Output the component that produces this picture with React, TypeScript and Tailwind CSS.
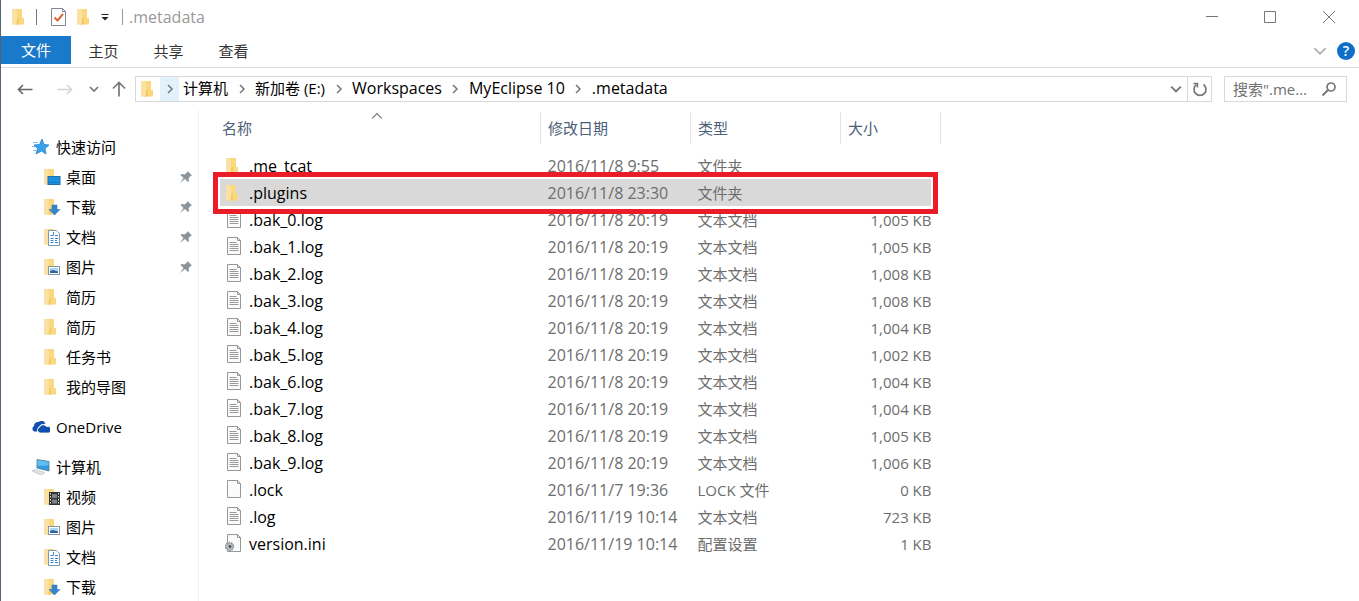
import type { ReactNode } from "react";

type Overlay = "desktop" | "download" | "document" | "picture" | "video";

function FolderIcon({ overlay }: { overlay?: Overlay }) {
  return (
    <svg width="18" height="18" viewBox="0 0 18 18" className="shrink-0" aria-hidden="true">
      <path d="M1 1h10v9h2v6.500H1z" fill="#f9d87f" />
      <path d="M1 1h3.500l1.500 3v13L1 15.500z" fill="#fbe2a4" />
      <path d="M6 11l2-1.500V16.500H5.500z" fill="#f1cb65" />
      {overlay === "desktop" && (
        <>
          <rect x="5" y="8.500" width="12" height="8" fill="#1b8fe0" stroke="#1f6fae" />
          <path d="M6 14.500h10" stroke="#1566a5" strokeDasharray="1 1" />
        </>
      )}
      {overlay === "download" && (
        <path d="M9 7h5v4.500h3L11.500 17 6 11.500h3z" fill="#3584cc" stroke="#2b74b8" strokeWidth=".5" />
      )}
      {overlay === "document" && (
        <>
          <path d="M5.500 2.500h8l3 3v12h-11z" fill="#fff" stroke="#7f98b2" />
          <path d="M10.500 4v3M7.500 7.500h3M12 7.500h3M7.500 10.500h3M12 10.500h3M7.500 12.500h3M12 14.500h3M7.500 14.500h3M12 12.500h2" stroke="#3c86c8" />
        </>
      )}
      {overlay === "picture" && (
        <>
          <rect x="5.500" y="8.500" width="11" height="8" fill="#fff" stroke="#8795a3" />
          <rect x="7" y="10" width="8" height="5" fill="#a9d4f2" />
          <path d="M7 15v-2l3-1 5 1.500V15z" fill="#2b669b" />
        </>
      )}
      {overlay === "video" && (
        <>
          <rect x="6" y="4" width="11" height="13" fill="#333" />
          <path d="M7.500 5v12M15.500 5v12" stroke="#ddd" strokeDasharray="1.500 1.500" />
          <path d="M9 6h5v4H9zM9 11.500h5v4H9z" fill="#7d838b" />
        </>
      )}
    </svg>
  );
}

function StarIcon() {
  return (
    <svg width="18" height="18" viewBox="0 0 18 18" className="shrink-0" aria-hidden="true">
      <path d="M10 1l2 5.500 5 .5-4 3.500 1 5.500-4.500-3L4 16l1.500-5.500L2 7l5.500-.5z" fill="#3aa0ea" stroke="#2282cf" strokeWidth=".8" />
      <path d="M1 4.500h5M0 8.500h3M1 12.500h3" stroke="#7cc0f0" />
    </svg>
  );
}

function CloudIcon() {
  return (
    <svg width="18" height="18" viewBox="0 0 18 18" className="shrink-0" aria-hidden="true">
      <path d="M2.500 13.500A3 3 0 0 1 2 8 4 4 0 0 1 6.500 4 4.500 4.500 0 0 1 13.500 5.500L9 6.500 6 9.500 5 13.500z" fill="#0f4fae" />
      <path d="M8 15a3 3 0 0 1-.5-5.800A4 4 0 0 1 14.500 8.500 3.300 3.300 0 0 1 17 15z" fill="#0f4fae" stroke="#fff" strokeWidth=".8" />
    </svg>
  );
}

function ComputerIcon() {
  return (
    <svg width="18" height="18" viewBox="0 0 18 18" className="shrink-0" aria-hidden="true">
      <path d="M5 1.500l12 2v9.500L5 10z" fill="#2f9de6" stroke="#53718a" strokeWidth=".8" />
      <path d="M5.500 2l11 2v3.500L5.500 8z" fill="#62bdf3" />
      <path d="M0 13l3-1.500 10 3L9 17z" fill="#dfe3e6" stroke="#b4bbc1" strokeWidth=".6" />
    </svg>
  );
}

function PinIcon() {
  return (
    <svg width="14" height="14" viewBox="0 0 14 14" className="shrink-0" aria-hidden="true">
      <path d="M8.500 1L13 5.500l-1.500.5-2 2.500.5 2.500-1 1-3-3L1 13l3.500-5-3-3 1-1 3 .5L8 2.500z" fill="#8b949b" />
    </svg>
  );
}

type FileKind = "folder" | "text" | "blank" | "config";

function FileIcon({ kind }: { kind: FileKind }) {
  if (kind === "folder") return <FolderIcon />;
  return (
    <svg width="18" height="20" viewBox="0 0 18 20" className="shrink-0" aria-hidden="true">
      <path d="M2.500 .5h10l3 3v14h-13z" fill="#fbfbfb" stroke="#979797" />
      <path d="M12.500 .5v3h3" fill="none" stroke="#979797" />
      {kind === "text" && <path d="M4.500 5.500h7M4.500 7.500h9M4.500 9.500h9M4.500 11.500h9M4.500 13.500h9" stroke="#9a9a9a" />}
      {kind === "config" && (
        <>
          <circle cx="4.500" cy="12.500" r="4" fill="#b4b8bb" stroke="#8b9093" strokeDasharray="1.500 1" strokeWidth="1.500" />
          <circle cx="5" cy="12.500" r="1.300" fill="#3e4346" />
        </>
      )}
    </svg>
  );
}

function Chevron({ dir, size, color, width }: { dir: "right" | "down" | "up"; size: number; color: string; width: number }) {
  const d = dir === "right" ? "M3 1l4 4-4 4" : dir === "down" ? "M1 3l4 4 4-4" : "M1 7l4-4 4 4";
  return (
    <svg width={size} height={size} viewBox="0 0 10 10" aria-hidden="true">
      <path d={d} fill="none" stroke={color} strokeWidth={width} />
    </svg>
  );
}

type Place = { label: string; overlay?: Overlay; pinned?: boolean };

const quick: Place[] = [
  { label: "桌面", overlay: "desktop", pinned: true },
  { label: "下载", overlay: "download", pinned: true },
  { label: "文档", overlay: "document", pinned: true },
  { label: "图片", overlay: "picture", pinned: true },
  { label: "简历" },
  { label: "简历" },
  { label: "任务书" },
  { label: "我的导图" },
];

const computer: Place[] = [
  { label: "视频", overlay: "video" },
  { label: "图片", overlay: "picture" },
  { label: "文档", overlay: "document" },
  { label: "下载", overlay: "download" },
];

function PlaceGroup({ icon, label, items }: { icon: ReactNode; label: string; items: Place[] }) {
  return (
    <section>
      <a href="#" className="flex h-[30px] items-center gap-[6px] pl-[31px]">
        {icon}
        {label}
      </a>
      {items.map((p, i) => (
        <a href="#" key={i} className="flex h-[30px] items-center gap-[5px] pr-[5px] pl-[42px]">
          <FolderIcon overlay={p.overlay} />
          <span className="flex-1">{p.label}</span>
          {p.pinned && <PinIcon />}
        </a>
      ))}
    </section>
  );
}

type Row = { name: string; date: string; type: string; size: string; kind: FileKind; selected?: boolean };

const bakSizes = ["1,005", "1,005", "1,008", "1,008", "1,004", "1,002", "1,004", "1,004", "1,005", "1,006"];

const rows: Row[] = [
  { name: ".me_tcat", date: "2016/11/8 9:55", type: "文件夹", size: "", kind: "folder" },
  { name: ".plugins", date: "2016/11/8 23:30", type: "文件夹", size: "", kind: "folder", selected: true },
  ...bakSizes.map((s, i): Row => ({ name: `.bak_${i}.log`, date: "2016/11/8 20:19", type: "文本文档", size: `${s} KB`, kind: "text" })),
  { name: ".lock", date: "2016/11/7 19:36", type: "LOCK 文件", size: "0 KB", kind: "blank" },
  { name: ".log", date: "2016/11/19 10:14", type: "文本文档", size: "723 KB", kind: "text" },
  { name: "version.ini", date: "2016/11/19 10:14", type: "配置设置", size: "1 KB", kind: "config" },
];

const crumbs = [
  { label: "计算机" },
  { label: "新加卷 (E:)" },
  { label: "Workspaces", latin: true },
  { label: "MyEclipse 10", latin: true },
  { label: ".metadata", latin: true },
];

function TitleBar() {
  return (
    <header className="flex h-9 items-center pb-[2px] pl-[10px] text-[#999]">
      <FolderIcon />
      <span className="ml-[7px] h-4 w-px bg-[#777]" />
      <button aria-label="属性" className="ml-[14px]">
        <svg width="16" height="18" viewBox="0 0 16 18" aria-hidden="true">
          <path d="M.500.5h11l3 3v14h-14z" fill="#fff" stroke="#7d8790" />
          <path d="M11.500.5v3h3" fill="none" stroke="#7d8790" />
          <path d="M3.500 9.500l3 3 5.500-6.500" fill="none" stroke="#dc6638" strokeWidth="2" />
        </svg>
      </button>
      <button aria-label="新建文件夹" className="ml-[9px]"><FolderIcon /></button>
      <button aria-label="自定义快速访问工具栏" className="ml-[6px]">
        <svg width="10" height="8" viewBox="0 0 10 8" aria-hidden="true">
          <path d="M1.500 1.500h7" stroke="#222" />
          <path d="M1.500 4h7L5 7.500z" fill="#222" />
        </svg>
      </button>
      <span className="ml-3 h-4 w-px bg-[#999]" />
      <h1 className="ml-[6px] flex-1 text-base leading-5">.metadata</h1>
      <button aria-label="最小化" className="flex w-[58px] justify-center">
        <svg width="14" height="14" viewBox="0 0 14 14" aria-hidden="true"><path d="M1 6.500h12" stroke="#777" /></svg>
      </button>
      <button aria-label="最大化" className="flex w-[58px] justify-center">
        <svg width="14" height="14" viewBox="0 0 14 14" aria-hidden="true"><path d="M1.500 1.500h11v11h-11z" fill="none" stroke="#777" /></svg>
      </button>
      <button aria-label="关闭" className="flex w-[60px] justify-center">
        <svg width="14" height="14" viewBox="0 0 14 14" aria-hidden="true"><path d="M1 1l12 12M13 1L1 13" stroke="#777" /></svg>
      </button>
    </header>
  );
}

function Ribbon() {
  return (
    <nav className="flex h-8 items-stretch border-b border-[#dadbdc] text-[#333]">
      <button className="mb-[3px] w-[70px] bg-[#1979ca] text-white">文件</button>
      {["主页", "共享", "查看"].map((t) => (
        <button key={t} className="w-[65px] pb-[2px]">{t}</button>
      ))}
      <div className="ml-auto flex items-center gap-[10px] pr-1 pb-[2px]">
        <button aria-label="展开功能区"><Chevron dir="down" size={14} color="#a5a5a5" width={1.1} /></button>
        <button aria-label="帮助" className="flex size-[18px] items-center justify-center rounded-full bg-[#0f6fc6] text-sm font-semibold text-white">?</button>
      </div>
    </nav>
  );
}

function AddressRow() {
  return (
    <div className="flex h-[42px] items-center pr-3 pl-4">
      <button aria-label="后退">
        <svg width="16" height="16" viewBox="0 0 16 16" aria-hidden="true"><path d="M15.500 8.500H1.500M6 4L1.500 8.500 6 13" fill="none" stroke="#666" strokeWidth="1.600" /></svg>
      </button>
      <button aria-label="前进" className="ml-6">
        <svg width="16" height="16" viewBox="0 0 16 16" aria-hidden="true"><path d="M.5 8.500h14M10 4L14.500 8.500 10 13" fill="none" stroke="#d4d4d4" strokeWidth="1.600" /></svg>
      </button>
      <button aria-label="最近浏览的位置" className="ml-4"><Chevron dir="down" size={10} color="#777" width={1.700} /></button>
      <button aria-label="上移" className="ml-3">
        <svg width="16" height="16" viewBox="0 0 16 16" aria-hidden="true"><path d="M8 15.500V1.500M2 7.500l6-6 6 6" fill="none" stroke="#777" strokeWidth="1.700" /></svg>
      </button>
      <div className="ml-2 flex h-[26px] flex-1 items-center border border-[#d9d9d9] pl-1">
        <FolderIcon />
        <ol className="flex h-full flex-1 items-center">
          {crumbs.map((c, i) => (
            <li key={c.label} className="flex h-full items-center">
              <span className={i === 0 ? "mr-1 ml-[2px] flex h-full w-[19px] items-center justify-center bg-[#e3f1fb]" : "flex w-[27px] justify-center"}>
                <Chevron dir="right" size={10} color="#777" width={1.500} />
              </span>
              <a href="#" className={c.latin ? "pb-[2px] text-base leading-5" : "pb-[2px]"}>{c.label}</a>
            </li>
          ))}
        </ol>
        <button aria-label="历史记录" className="px-[5px]"><Chevron dir="down" size={12} color="#777" width={1.600} /></button>
        <button aria-label="刷新" className="flex h-full w-6 items-center justify-center border-l border-[#d9d9d9]">
          <svg width="16" height="16" viewBox="0 0 16 16" aria-hidden="true">
            <path d="M4.500 3.500A6 6 0 1 0 11.500 3.500" fill="none" stroke="#777" strokeWidth="1.700" />
            <path d="M1.500 2.500h4v4" fill="none" stroke="#777" strokeWidth="1.500" />
          </svg>
        </button>
      </div>
      <label className="ml-3 flex h-[26px] w-[123px] items-center border border-[#d9d9d9] pr-[9px] pl-2">
        <input type="text" aria-label="搜索" placeholder={'搜索".me...'} className="w-full min-w-0 outline-none placeholder:text-[#707070]" />
        <svg width="16" height="16" viewBox="0 0 16 16" className="shrink-0" aria-hidden="true">
          <circle cx="10" cy="6" r="4" fill="none" stroke="#777" strokeWidth="1.700" />
          <path d="M7 9l-5.500 5.500" stroke="#777" strokeWidth="2" />
        </svg>
      </label>
    </div>
  );
}

function FileTable() {
  return (
    <table className="ml-[14px] w-[728px] table-fixed border-collapse">
      <colgroup>
        <col />
        <col className="w-[150px]" />
        <col className="w-[150px]" />
        <col className="w-[100px]" />
      </colgroup>
      <thead className="text-left text-[#4c607a]">
        <tr>
          <th className="border-r border-[#e3e3e3] pl-[9px] font-normal">
            <div className="relative flex h-8 items-center">
              名称
              <span className="absolute -top-[2px] left-[149px]"><Chevron dir="up" size={12} color="#777" width={1} /></span>
            </div>
          </th>
          <th className="border-r border-[#e3e3e3] pl-[7px] font-normal">修改日期</th>
          <th className="border-r border-[#e3e3e3] pl-[7px] font-normal">类型</th>
          <th className="border-r border-[#e3e3e3] pl-[7px] font-normal">大小</th>
        </tr>
      </thead>
      <tbody className="text-[#6d6d6d] before:block before:h-2">
        {rows.map((r) => {
          const fill = r.selected ? "bg-[#d9d9d9]" : "";
          return (
            <tr key={r.name} className={r.selected ? "relative" : ""}>
              <td className={`p-0 text-black ${fill}`}>
                <div className="flex h-[27px] items-center gap-[6px] pl-3 text-base leading-5">
                  <FileIcon kind={r.kind} />
                  {r.name}
                </div>
                {r.selected && <span className="absolute -top-[7px] right-[3px] -bottom-2 left-0 border-5 border-[#e91c28] ring-2 ring-white ring-inset" />}
              </td>
              <td className={`p-0 pl-[7px] text-base leading-5 ${fill}`}>{r.date}</td>
              <td className={`p-0 pl-[7px] ${fill}`}>{r.type}</td>
              <td className="p-0 pr-[6px]">
                <div className={`flex h-[27px] items-center justify-end pr-[3px] ${fill}`}>{r.size}</div>
              </td>
            </tr>
          );
        })}
      </tbody>
    </table>
  );
}

export default function App() {
  return (
    <div className="flex h-screen flex-col overflow-hidden border-l border-[#56617a] bg-white font-['Open_Sans','Noto_Sans_CJK_SC',sans-serif] text-[15px] leading-5 text-black">
      <TitleBar />
      <Ribbon />
      <AddressRow />
      <main className="flex min-h-0 flex-1">
        <aside className="flex w-[198px] shrink-0 flex-col gap-[10px] border-r border-[#f3f3f3] pt-[22px]">
          <PlaceGroup icon={<StarIcon />} label="快速访问" items={quick} />
          <PlaceGroup icon={<CloudIcon />} label="OneDrive" items={[]} />
          <PlaceGroup icon={<ComputerIcon />} label="计算机" items={computer} />
        </aside>
        <div className="flex-1 overflow-hidden pt-[2px]">
          <FileTable />
        </div>
      </main>
    </div>
  );
}
